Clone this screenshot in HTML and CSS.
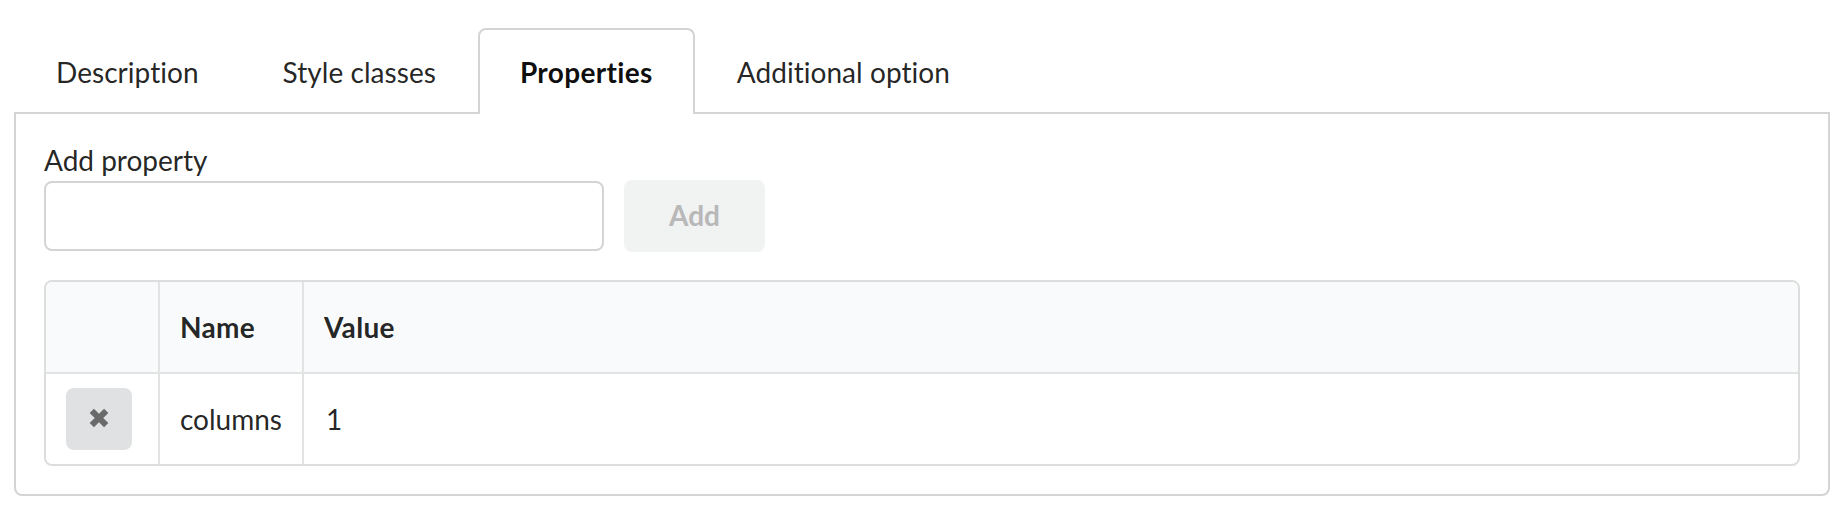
FILE: index.html
```html
<!DOCTYPE html>
<html>
<head>
<meta charset="utf-8">
<link rel="stylesheet" href="styles.css">
</head>
<body>
<div class="tabs">
  <div class="tab">Description</div>
  <div class="tab">Style classes</div>
  <div class="tab active">Properties</div>
  <div class="tab">Additional option</div>
</div>
<div class="panel">
  <div class="label">Add property</div>
  <div class="form-row">
    <input class="input" type="text">
    <button class="add-btn">Add</button>
  </div>
  <table class="props">
    <thead>
      <tr>
        <th class="c1"></th>
        <th class="c2">Name</th>
        <th class="c3">Value</th>
      </tr>
    </thead>
    <tbody>
      <tr>
        <td class="c1">
          <button class="del-btn">
            <svg width="22" height="22" viewBox="0 0 22 22"><path d="M3.8 3.8 L18.2 18.2 M18.2 3.8 L3.8 18.2" stroke="#6a6a6a" stroke-width="6" stroke-linecap="butt" fill="none"/></svg>
          </button>
        </td>
        <td class="c2">columns</td>
        <td class="c3 val">1</td>
      </tr>
    </tbody>
  </table>
</div>
</body>
</html>
```

FILE: styles.css
```css
html, body {
  margin: 0;
  padding: 0;
  background: #ffffff;
}
body {
  font-family: Lato, "Noto Sans", sans-serif;
  font-size: 28px;
  color: rgba(0, 0, 0, 0.87);
}
.tabs {
  display: flex;
  margin-top: 28px;
  padding-left: 14px;
  position: relative;
  z-index: 2;
}
.tab {
  box-sizing: border-box;
  height: 86px;
  padding: 0 40px;
  border: 2px solid transparent;
  border-bottom: none;
  line-height: 84px;
  color: rgba(0, 0, 0, 0.87);
  white-space: nowrap;
  letter-spacing: 0.05px;
}
.tab.active {
  border-color: #d4d4d5;
  border-radius: 8px 8px 0 0;
  background: #fff;
  font-weight: 700;
  color: rgba(0, 0, 0, 0.95);
  letter-spacing: 0.35px;
}
.panel {
  box-sizing: border-box;
  margin-top: -2px;
  margin-left: 14px;
  width: 1816px;
  border: 2px solid #d4d4d5;
  border-radius: 0 0 8px 8px;
  padding: 29px 28px 28px 28px;
}
.label {
  line-height: 34px;
  margin-bottom: 3px;
}
.form-row {
  display: flex;
  align-items: center;
  gap: 20px;
  height: 72px;
}
.input {
  box-sizing: border-box;
  width: 560px;
  height: 70px;
  border: 2px solid #d4d4d5;
  border-radius: 8px;
  margin: 0;
  padding: 0 20px;
  font-family: inherit;
  font-size: 28px;
  outline: none;
}
.add-btn {
  box-sizing: border-box;
  width: 141px;
  height: 72px;
  border: none;
  border-radius: 8px;
  background: #f1f2f2;
  color: #b8b8b8;
  font-family: inherit;
  font-size: 28px;
  font-weight: 700;
  padding: 0 0 2px 0;
}
.props {
  margin-top: 28px;
  width: 100%;
  border: 2px solid #dcdddd;
  border-radius: 8px;
  border-collapse: separate;
  border-spacing: 0;
  box-sizing: border-box;
}
.props th {
  background: #f9fafb;
  height: 90px;
  text-align: left;
  font-weight: 700;
  letter-spacing: 0.3px;
  border-bottom: 2px solid #e2e3e3;
  padding: 0 20px;
  box-sizing: content-box;
}
.props thead th:first-child { border-top-left-radius: 6px; }
.props thead th:last-child { border-top-right-radius: 6px; }
.props td {
  height: 90px;
  padding: 0 20px;
  box-sizing: content-box;
}
.props .c1 { width: 72px; }
.props .c2 { width: 102px; border-left: 2px solid #e2e3e3; }
.props .c3 { border-left: 2px solid #e2e3e3; }
.props .val { padding-left: 22px; }
.del-btn {
  display: flex;
  align-items: center;
  justify-content: center;
  width: 66px;
  height: 62px;
  border: none;
  border-radius: 8px;
  background: #e0e1e2;
  padding: 0 0 3px 0;
}
```
